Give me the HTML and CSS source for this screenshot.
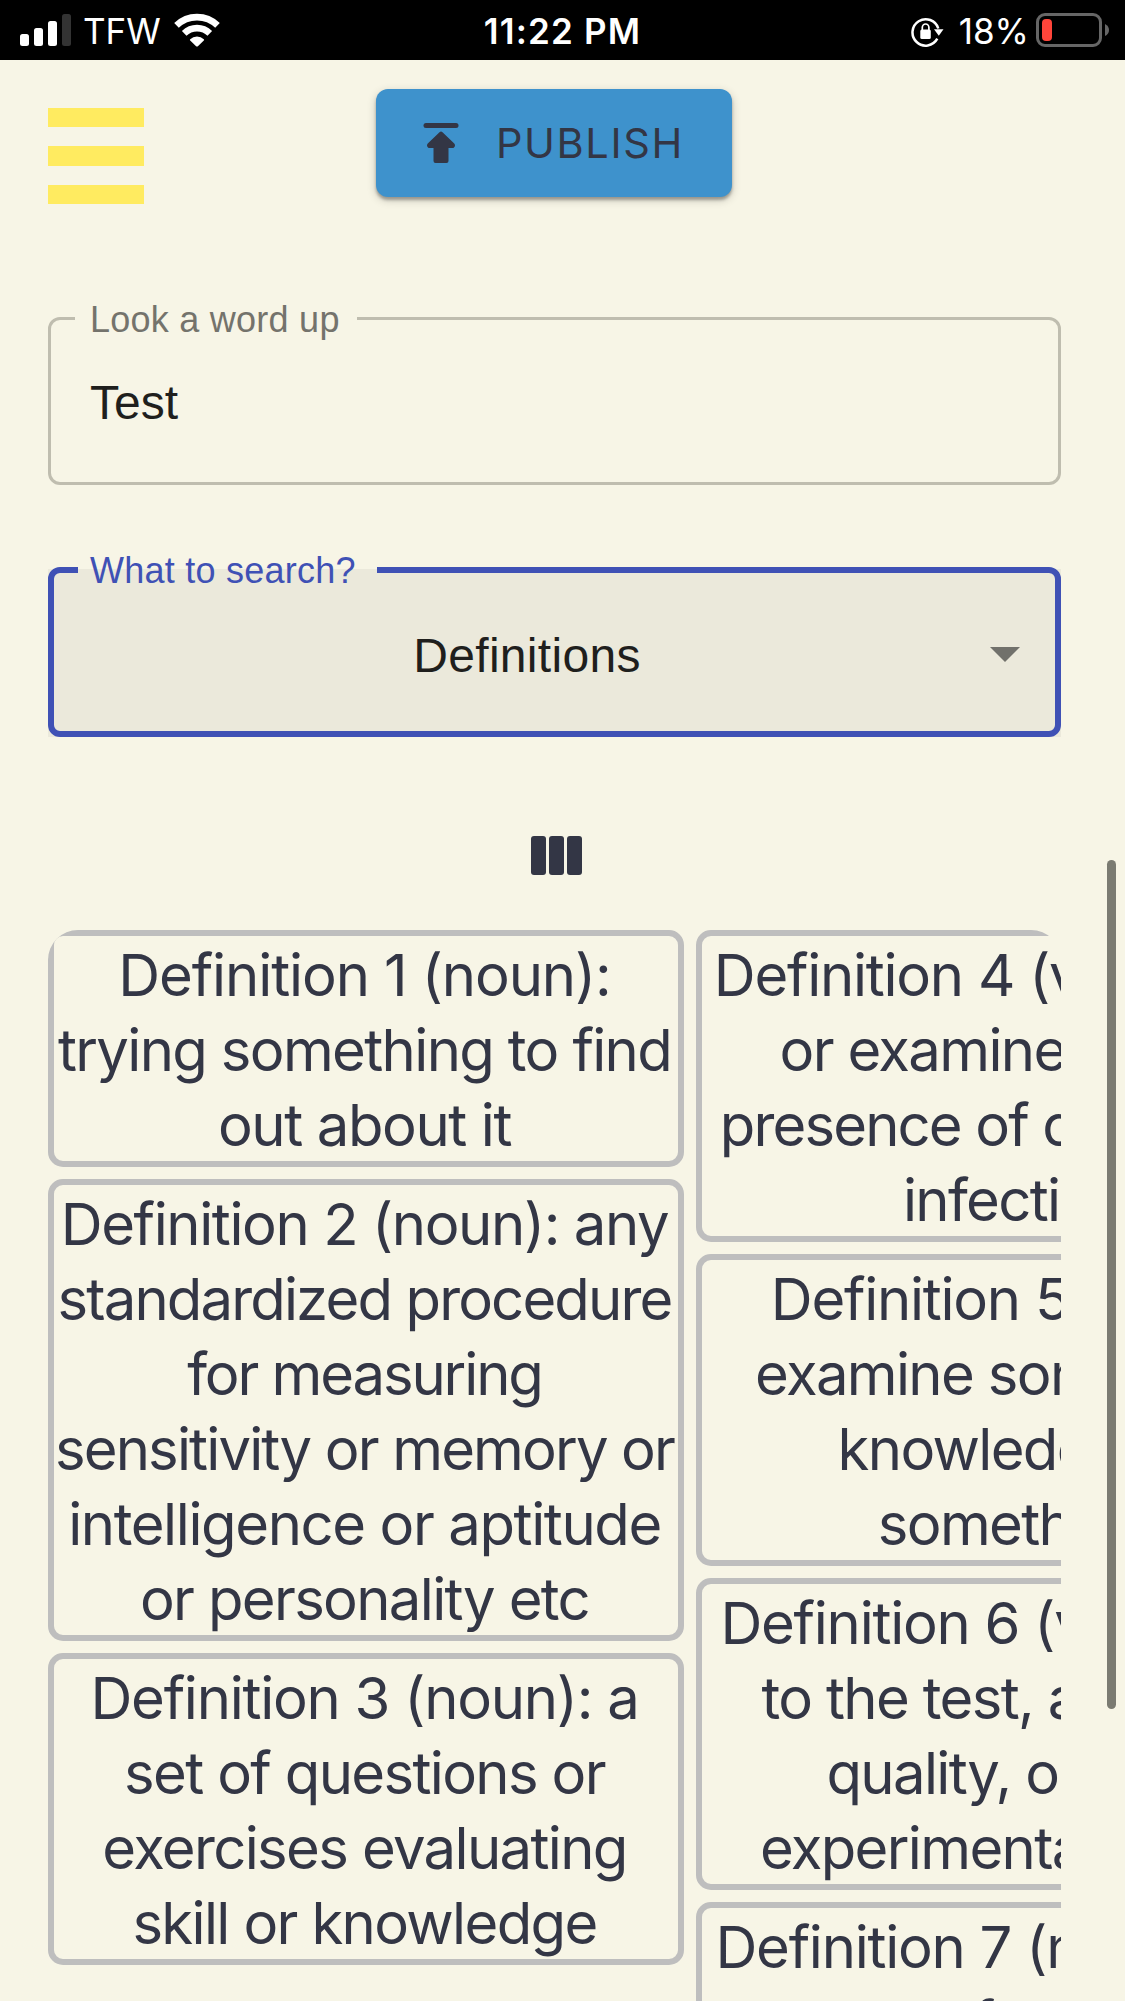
FILE: index.html
```html
<!DOCTYPE html>
<html lang="en">
<head>
<meta charset="utf-8">
<title>Word lookup</title>
<link rel="stylesheet" href="styles.css">
</head>
<body>
<header class="status">
  <div class="status-left">
    <svg class="signal" width="51" height="32" viewBox="0 0 51 32"><g fill="#fff"><rect y="20" width="9" height="12" rx="2.5"/><rect x="14" y="14" width="9" height="18" rx="2.5"/><rect x="28" y="7" width="9" height="25" rx="2.5"/></g><rect x="42" width="9" height="32" rx="2.5" fill="#333"/></svg>
    <span class="carrier">TFW</span>
    <svg class="wifi" width="46" height="34" viewBox="0 0 46 34"><g fill="none" stroke="#fff" stroke-width="6.6"><path d="M2.5 12.4a29.5 29.5 0 0 1 41 0"/><path d="M10.200 20.300a18.300 18.300 0 0 1 25.600 0"/></g><path d="M16.200 26.200a9.800 9.800 0 0 1 13.600 0q.7.700 0 1.400l-5.900 5.600q-.9.800-1.800 0l-5.900-5.600q-.7-.7 0-1.400z" fill="#fff"/></svg>
  </div>
  <span class="clock">11:22 PM</span>
  <div class="status-right">
    <svg class="lock" width="33" height="30" viewBox="0 0 33 30"><path d="M26.300 21.700A13.200 13.200 0 1 1 27.300 11.500" fill="none" stroke="#fff" stroke-width="2.500"/><path d="M23 12.200h9.500l-4.700 6.600z" fill="#fff"/><rect x="9.300" y="12.500" width="10.500" height="9.500" rx="1.500" fill="#fff"/><path d="M11.300 13v-2.500a3.300 3.500 0 0 1 6.600 0V13" fill="none" stroke="#fff" stroke-width="1.700"/></svg>
    <span class="percent">18%</span>
    <svg class="battery" width="74" height="34" viewBox="0 0 74 34"><rect x="1.500" y="1.500" width="63" height="31" rx="7.500" fill="none" stroke="#666" stroke-width="3"/><rect x="6" y="6" width="10" height="22" rx="4" fill="#ff453a"/><path d="M69 11q4 2 4 6t-4 6z" fill="#666"/></svg>
  </div>
</header>
<main class="page">
  <div class="toolbar">
    <div class="menu"><i></i><i></i><i></i></div>
    <button class="publish">
      <svg width="36" height="41" viewBox="0 0 36 41" fill="#333645"><rect x=".5" width="35" height="5" rx="2.500"/><path d="M16.500 9.200Q18 7.600 19.500 9.200L31 20.300Q33 22.500 31 24.500Q30.400 25 29.500 25H25.500V38Q25.500 40 23.500 40H12.500Q10.500 40 10.500 38V25H6.500Q5.600 25 5 24.500Q3 22.500 5 20.300Z"/></svg>
      <span>PUBLISH</span>
    </button>
  </div>
  <fieldset class="field">
    <legend><span>Look a word up</span></legend>
    <div class="value">Test</div>
  </fieldset>
  <div class="select-wrap">
    <fieldset class="field select">
      <legend><span>What to search?</span></legend>
      <div class="value"><span>Definitions</span><svg width="30" height="15" viewBox="0 0 30 15"><path d="M0 0h30L15 15z" fill="#71716b"/></svg></div>
    </fieldset>
  </div>
  <svg class="columns" width="51" height="39" viewBox="0 0 51 39" fill="#333645"><rect width="15" height="39" rx="3"/><rect x="18" width="15" height="39" rx="3"/><rect x="36" width="15" height="39" rx="3"/></svg>
  <section class="board">
    <div class="col">
      <article class="card"><p class="loose">Definition 1 (noun):</p><p>trying something to find</p><p class="soft">out about it</p></article>
      <article class="card"><p class="soft">Definition 2 (noun): any</p><p class="tight">standardized procedure</p><p class="tighter">for measuring</p><p class="tight">sensitivity or memory or</p><p class="soft">intelligence or aptitude</p><p>or personality etc</p></article>
      <article class="card"><p class="head">Definition 3 (noun): a</p><p>set of questions or</p><p>exercises evaluating</p><p>skill or knowledge</p></article>
    </div>
    <div class="col">
      <article class="card"><p class="head">Definition 4 (verb): test</p><p>or examine for the</p><p class="tight">presence of disease or</p><p>infection</p></article>
      <article class="card"><p class="head">Definition 5 (verb):</p><p>examine someone's</p><p>knowledge of</p><p>something</p></article>
      <article class="card"><p class="head">Definition 6 (verb): put</p><p>to the test, as for its</p><p>quality, or give</p><p>experimental use to</p></article>
      <article class="card"><p class="head">Definition 7 (noun): the</p><p>act of testing</p></article>
    </div>
  </section>
</main>
<div class="scrollbar"></div>
</body>
</html>
```
FILE: styles.css
```css
* { box-sizing: border-box; }
body { margin: 0; width: 1125px; height: 2001px; overflow: hidden; background: #f7f5e6; color: #333645; font-family: Inter, sans-serif; position: relative; }
svg { display: block; flex: none; }
.status { height: 60px; background: #000; color: #fff; display: grid; grid-template-columns: 1fr auto 1fr; font-size: 35px; line-height: 60px; }
.status-left, .status-right { display: flex; align-items: flex-start; }
.status-left { padding-left: 20px; }
.signal { margin-top: 14px; }
.carrier { margin-left: 12px; width: 78px; height: 60px; white-space: nowrap; padding-top: 1px; }
.wifi { margin: 13px 0 0 13px; }
.clock { font-weight: 600; padding-top: 1px; height: 60px; letter-spacing: 1.200px; }
.status-right { justify-content: flex-end; padding-right: 15px; }
.lock { margin-top: 17px; }
.percent { padding-top: 1px; margin: 0 7px 0 15px; height: 60px; }
.battery { margin-top: 13px; }
.page { padding: 29px 64px 0 48px; display: flex; flex-direction: column; }
.toolbar { display: flex; height: 108px; }
.menu { width: 96px; height: 96px; margin-top: 19px; display: flex; flex-direction: column; justify-content: space-between; }
.menu i { height: 19px; background: #ffeb60; }
.menu i:nth-child(2) { height: 20px; }
.publish { margin-left: 232px; width: 356px; height: 108px; border: 0; border-radius: 12px; background: #3e92cc; color: #333645; font: 400 41.500px Inter, sans-serif; letter-spacing: 1.600px; display: flex; align-items: center; padding: 0 0 0 47px; box-shadow: 0 3px 3px rgba(0,0,0,.28), 0 3px 10px rgba(0,0,0,.2); }
.publish span { margin-left: 37px; }
.field { width: 1013px; height: 180px; margin: 108px 0 0; padding: 0 39px; border: 3px solid #bfbdaf; border-radius: 12px; font-family: "Liberation Sans", sans-serif; color: #1f1f1d; min-width: 0; }
.field legend { height: 27px; margin-left: -15px; padding: 0 0 0 15px; width: 282px; font-size: 36px; line-height: 29px; color: #74736c; white-space: nowrap; letter-spacing: .25px; }
.field .value { font-size: 48px; line-height: 56px; padding-top: 43px; }
.select-wrap { margin-top: 71px; width: 1013px; background: linear-gradient(transparent 13px, #ebe9db 13px); }
.select { margin: 0; border: 6px solid #3f51b5; height: 181px; padding-right: 35px; }
.field.select legend { color: #3f51b5; width: 299px; height: 28px; padding-left: 12px; }
.select .value { display: flex; align-items: center; padding-top: 42px; letter-spacing: .3px; }
.select .value span { flex: 1; text-align: center; padding: 2px 29px 0 0; }
.select .value svg { margin-bottom: 2px; }
.columns { margin: 99px 0 0 483px; }
.board { margin-top: 55px; width: 1013px; height: 1071px; overflow: hidden; border-radius: 30px 30px 0 0; display: flex; gap: 12px; }
.col { flex: 0 0 636px; width: 636px; min-width: 0; display: flex; flex-direction: column; gap: 12px; }
.card { flex: none; width: 636px; border: 6px solid #bebebe; border-radius: 15px; }
.card p { margin: 0; height: 75px; line-height: 79px; font-size: 58px; letter-spacing: -1.650px; white-space: nowrap; display: flex; justify-content: center; padding-right: 3px; }
.col:last-child p { padding-right: 0; }
.card .loose { letter-spacing: -1.100px; }
.card .head { letter-spacing: -1.250px; }
.card .soft { letter-spacing: -1.400px; }
.card .tight { letter-spacing: -1.850px; }
.card .tighter { letter-spacing: -2.100px; }
.scrollbar { position: absolute; left: 1107px; top: 860px; width: 9px; height: 849px; border-radius: 5px; background: #7b7b72; }
```
